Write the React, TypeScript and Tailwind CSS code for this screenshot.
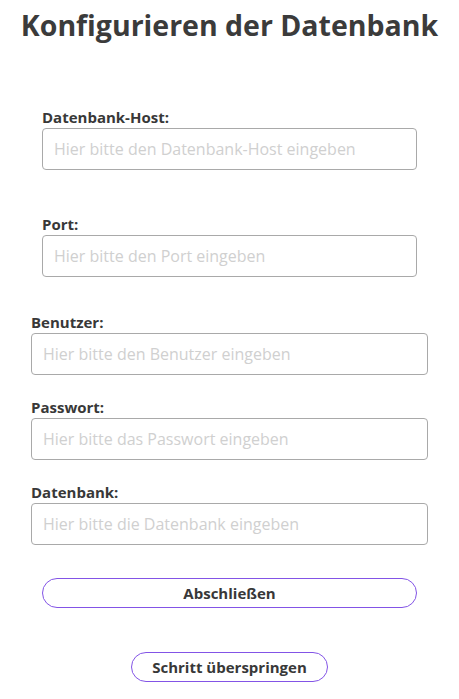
const fieldsTop = [
  { label: 'Datenbank-Host:', placeholder: 'Hier bitte den Datenbank-Host eingeben', gap: 'mt-0' },
  { label: 'Port:', placeholder: 'Hier bitte den Port eingeben', gap: 'mt-[44px]' },
]

const fieldsBottom = [
  { label: 'Benutzer:', placeholder: 'Hier bitte den Benutzer eingeben', gap: 'mt-[35px]' },
  { label: 'Passwort:', placeholder: 'Hier bitte das Passwort eingeben', gap: 'mt-[22px]' },
  { label: 'Datenbank:', placeholder: 'Hier bitte die Datenbank eingeben', gap: 'mt-[22px]' },
]

function Field({ label, placeholder, gap }: { label: string; placeholder: string; gap: string }) {
  return (
    <div className={`flex flex-col ${gap}`}>
      <label className="text-[15px] font-bold leading-5 text-[#383838] mb-[1px]">{label}</label>
      <input
        type="text"
        placeholder={placeholder}
        className="h-[42px] w-full rounded-[4px] border border-[#a9a9a9] bg-white px-[11px] text-[16px] text-[#383838] outline-none placeholder:text-[#d0d0d0]"
      />
    </div>
  )
}

export default function App() {
  return (
    <div className="min-h-[699px] w-full bg-white px-[31px] text-[#383838]" style={{ fontFamily: '"Open Sans", "Noto Sans", sans-serif' }}>
      <h1 className="-mx-[31px] whitespace-nowrap pt-[5px] text-center text-[28.5px] font-bold leading-[40px] text-[#3b3b3b]">
        Konfigurieren der Datenbank
      </h1>

      <div className="mt-[62px] px-[11px]">
        {fieldsTop.map((f) => (
          <Field key={f.label} {...f} />
        ))}
      </div>

      <div>
        {fieldsBottom.map((f) => (
          <Field key={f.label} {...f} />
        ))}
      </div>

      <div className="mt-[33px] flex flex-col items-center px-[11px]">
        <button className="h-[30px] w-full rounded-full border-[1.5px] border-[#8354e6] bg-white text-[15px] font-bold text-[#383838]">
          Abschließen
        </button>
        <button className="mt-[44px] h-[30px] w-[197px] rounded-full border-[1.5px] border-[#8354e6] bg-white text-[15px] font-bold text-[#383838]">
          Schritt überspringen
        </button>
      </div>
    </div>
  )
}
